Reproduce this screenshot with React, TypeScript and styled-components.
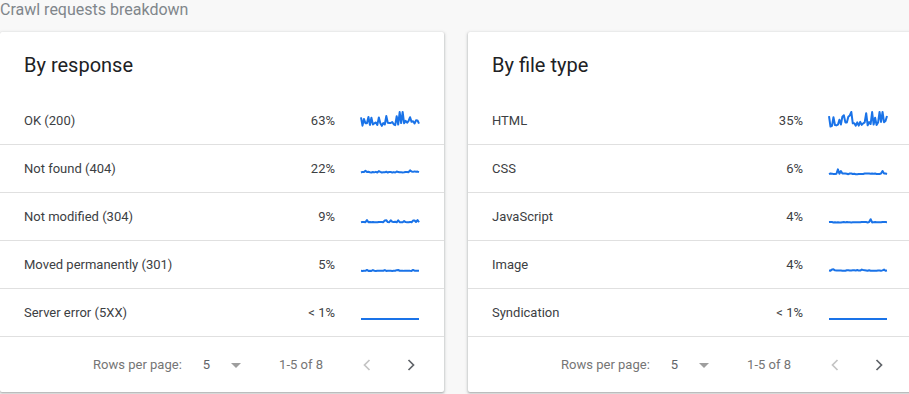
import React from 'react';
import styled, { createGlobalStyle } from 'styled-components';

type SparkOpts = {
  seed: number;
  base: number;
  noise: number;
  spike: number;
  spikeProb: number;
  trend?: number;
};

type Row = { label: string; pct: string; spark: SparkOpts };

const GlobalStyle = createGlobalStyle`
  html, body {
    margin: 0;
    padding: 0;
    background: #f8f8f8;
    font-family: Roboto, "Liberation Sans", Arial, sans-serif;
    overflow: hidden;
  }
`;

// small seeded random so the sparklines look the same every render
const rng = (seed: number) => {
  let a = seed * 9301 + 49297;
  return () => {
    a |= 0;
    a = (a + 0x6d2b79f5) | 0;
    let t = Math.imul(a ^ (a >>> 15), 1 | a);
    t = (t + Math.imul(t ^ (t >>> 7), 61 | t)) ^ t;
    return ((t ^ (t >>> 14)) >>> 0) / 4294967296;
  };
};

const BASE_Y = 17;
const POINTS = 40;

const sparkPath = (o: SparkOpts) => {
  const rand = rng(o.seed);
  const pts: string[] = [];
  for (let i = 0; i < POINTS; i++) {
    let v = o.base + ((o.trend || 0) * i) / POINTS + (rand() - 0.5) * o.noise;
    if (rand() < o.spikeProb) v += o.spike * (0.5 + rand() * 0.5);
    v = Math.max(0, Math.min(15, v));
    const x = 1 + (i * 58) / (POINTS - 1);
    pts.push(`${i === 0 ? 'M' : 'L'}${x.toFixed(2)} ${(BASE_Y - v).toFixed(2)}`);
  }
  return pts.join(' ');
};

const byResponse: Row[] = [
  { label: 'OK (200)', pct: '63%', spark: { seed: 11, base: 2, noise: 4, spike: 13, spikeProb: 0.35, trend: 3 } },
  { label: 'Not found (404)', pct: '22%', spark: { seed: 2, base: 2.6, noise: 1, spike: 1.2, spikeProb: 0.12, trend: 0.6 } },
  { label: 'Not modified (304)', pct: '9%', spark: { seed: 3, base: 1, noise: 0.7, spike: 1.8, spikeProb: 0.25 } },
  { label: 'Moved permanently (301)', pct: '5%', spark: { seed: 4, base: 0.2, noise: 0.3, spike: 1, spikeProb: 0.15 } },
  { label: 'Server error (5XX)', pct: '< 1%', spark: { seed: 5, base: 0, noise: 0, spike: 1.4, spikeProb: 0.02 } },
];

const byFileType: Row[] = [
  { label: 'HTML', pct: '35%', spark: { seed: 21, base: 2, noise: 4, spike: 13, spikeProb: 0.35, trend: 2.5 } },
  { label: 'CSS', pct: '6%', spark: { seed: 22, base: 1.2, noise: 0.8, spike: 5, spikeProb: 0.18 } },
  { label: 'JavaScript', pct: '4%', spark: { seed: 23, base: 0.8, noise: 0.5, spike: 4.5, spikeProb: 0.08 } },
  { label: 'Image', pct: '4%', spark: { seed: 24, base: 0.5, noise: 0.6, spike: 1.2, spikeProb: 0.15 } },
  { label: 'Syndication', pct: '< 1%', spark: { seed: 25, base: 0, noise: 0, spike: 0, spikeProb: 0 } },
];

const Sparkline = ({ opts }: { opts: SparkOpts }) => (
  <Spark viewBox="0 0 60 22" width={60} height={22}>
    <path d={sparkPath(opts)} fill="none" stroke="#1a73e8" strokeWidth={2} strokeLinejoin="round" />
  </Spark>
);

const Chevron = ({ dir, disabled }: { dir: 'left' | 'right'; disabled?: boolean }) => (
  <NavButton $disabled={disabled}>
    <svg viewBox="0 0 24 24" width={24} height={24}>
      <polyline
        points={dir === 'left' ? '14.5,7 9.5,12 14.5,17' : '9.5,7 14.5,12 9.5,17'}
        fill="none"
        stroke="currentColor"
        strokeWidth={1.7}
      />
    </svg>
  </NavButton>
);

const BreakdownCard = ({ title, rows }: { title: string; rows: Row[] }) => (
  <Card>
    <CardHeader>{title}</CardHeader>
    {rows.map((r) => (
      <TableRow key={r.label}>
        <Label>{r.label}</Label>
        <Pct>{r.pct}</Pct>
        <Sparkline opts={r.spark} />
      </TableRow>
    ))}
    <Footer>
      <RowsLabel>Rows per page:</RowsLabel>
      <PageSize>
        5
        <svg viewBox="0 0 24 24" width={24} height={24}>
          <path d="M7 10l5 5 5-5z" fill="#9e9e9e" />
        </svg>
      </PageSize>
      <Range>1-5 of 8</Range>
      <Chevron dir="left" disabled />
      <Chevron dir="right" />
    </Footer>
  </Card>
);

const App = () => (
  <>
    <GlobalStyle />
    <Page>
      <Heading>Crawl requests breakdown</Heading>
      <Cards>
        <BreakdownCard title="By response" rows={byResponse} />
        <BreakdownCard title="By file type" rows={byFileType} />
      </Cards>
    </Page>
  </>
);

const Page = styled.div`
  width: 912px;
  height: 394px;
  overflow: hidden;
`;

const Heading = styled.div`
  font-size: 16px;
  line-height: 20px;
  color: #80868b;
  margin-bottom: 12px;
`;

const Cards = styled.div`
  display: grid;
  grid-template-columns: 444px 444px;
  column-gap: 24px;
`;

const Card = styled.div`
  background: #fff;
  border-radius: 2px;
  box-shadow: 0 1px 2px rgba(60, 64, 67, 0.3), 0 1px 3px 1px rgba(60, 64, 67, 0.15);
  height: 360px;
  display: flex;
  flex-direction: column;
`;

const CardHeader = styled.div`
  height: 65px;
  flex: none;
  display: flex;
  align-items: center;
  padding: 0 24px;
  box-sizing: border-box;
  font-size: 20px;
  color: #202124;
`;

const TableRow = styled.div`
  height: 48px;
  flex: none;
  box-sizing: border-box;
  border-bottom: 1px solid #e0e0e0;
  display: grid;
  grid-template-columns: 1fr auto 60px;
  column-gap: 25px;
  align-items: center;
  padding: 0 24px;
  font-size: 13px;
  color: #3c4043;
`;

const Label = styled.span``;

const Pct = styled.span`
  text-align: right;
`;

const Spark = styled.svg`
  display: block;
`;

const Footer = styled.div`
  flex: 1;
  display: flex;
  align-items: center;
  justify-content: flex-end;
  padding-right: 13px;
  font-size: 13px;
  color: #757575;
`;

const RowsLabel = styled.span`
  margin-right: 21px;
`;

const PageSize = styled.span`
  display: flex;
  align-items: center;
  gap: 14px;
  color: #5f6368;
  margin-right: 31px;
`;

const Range = styled.span`
  margin-right: 20px;
`;

const NavButton = styled.span<{ $disabled?: boolean }>`
  width: 40px;
  height: 40px;
  display: flex;
  align-items: center;
  justify-content: center;
  margin-left: 4px;
  color: ${(p) => (p.$disabled ? '#c4c4c4' : '#5f6368')};
`;

export default App;
